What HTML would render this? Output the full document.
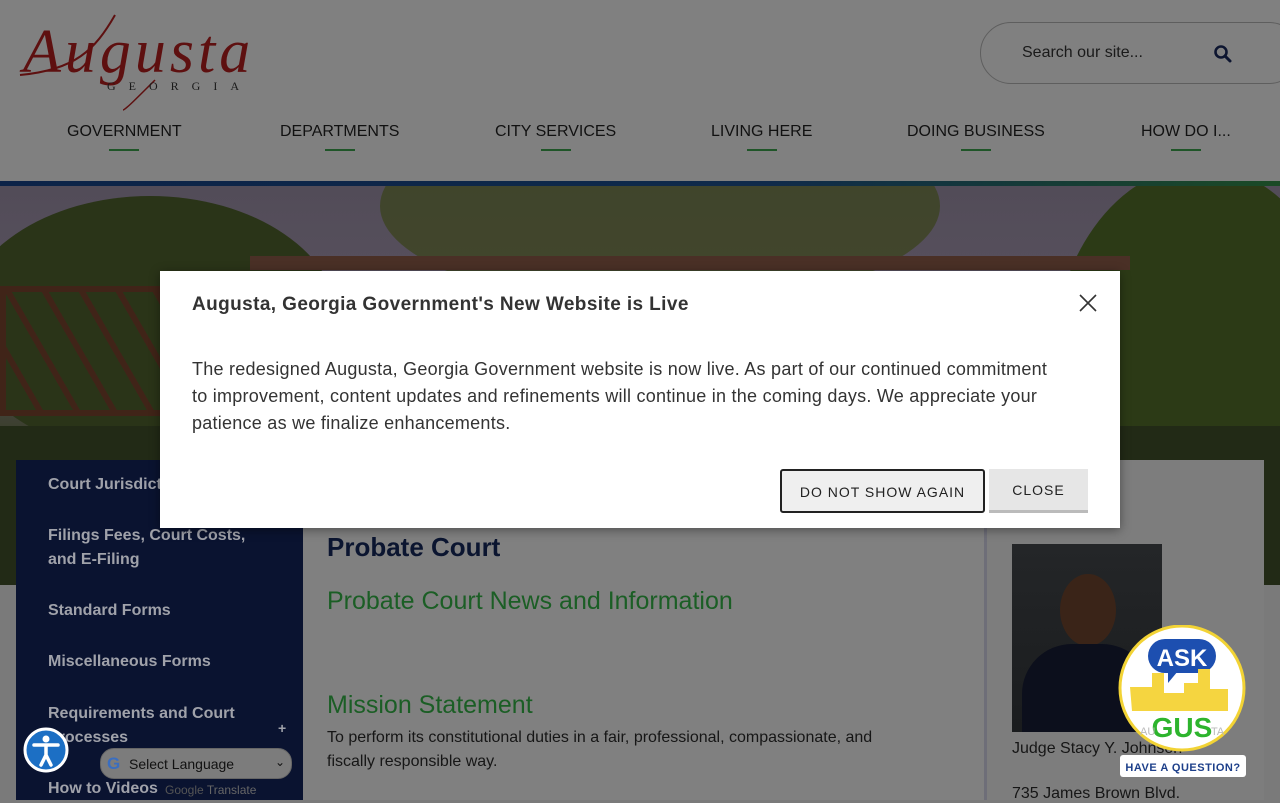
<!DOCTYPE html>
<html><head><meta charset="utf-8"><style>
*{box-sizing:border-box;margin:0;padding:0}
body{width:1280px;height:800px;overflow:hidden;background:#7a7a7a;font-family:"Liberation Sans",sans-serif;position:relative}
.hdr{position:absolute;left:0;top:0;width:1280px;height:181px;background:#808080}
.stripe{position:absolute;left:0;top:181px;width:1280px;height:5px;background:linear-gradient(90deg,#0c2348,#0f2a4a 60%,#1b4a26)}
.nav a{position:absolute;top:123px;font-size:16px;color:#111;text-decoration:none}
.nav a:after{content:"";position:absolute;left:50%;margin-left:-15px;bottom:-10px;width:30px;height:2px;background:#1f5528}
.search{position:absolute;left:980px;top:22px;width:320px;height:62px;border:1px solid #5e5e5e;border-radius:31px}
.search span{position:absolute;left:41px;top:21px;font-size:16px;color:#1a1a1a}
.hero{position:absolute;left:0;top:186px;width:1280px;height:399px;overflow:hidden;background:linear-gradient(180deg,#524c58 0%,#5a5260 40%,#2e3618 70%,#222a14 100%)}
.blob{position:absolute;border-radius:50%}
.leftnav{position:absolute;left:16px;top:460px;width:287px;height:340px;background:#0a1330}
.leftnav div{position:absolute;left:32px;font-size:16px;font-weight:bold;color:#a0a2aa;line-height:24px}
.content{position:absolute;left:303px;top:460px;width:684px;height:340px;background:#808080;border-right:3px solid #6e6e78}
.side{position:absolute;left:987px;top:460px;width:277px;height:340px;background:#7d7d7d}
.modal{position:absolute;left:160px;top:271px;width:960px;height:257px;background:#fff;box-shadow:0 2px 10px rgba(0,0,0,.4)}
.modal h2{position:absolute;left:32px;top:23px;font-size:19px;font-weight:bold;color:#333;letter-spacing:0.4px}
.modal p{position:absolute;left:32px;top:85px;width:868px;font-size:18px;line-height:27px;color:#333;letter-spacing:0.25px}
.btn{position:absolute;top:198px;height:44px;font-size:14px;letter-spacing:1px;color:#222;text-align:center;line-height:42px}
</style></head><body>
<div class="hdr">
  <svg style="position:absolute;left:15px;top:10px" width="305" height="105" viewBox="0 0 305 105">
    <text x="8" y="62" font-family="Liberation Serif,serif" font-style="italic" font-size="62" fill="#5e1010" letter-spacing="4">Augusta</text>
    <path d="M100 5 C80 40,60 60,5 65" stroke="#5e1010" stroke-width="2" fill="none"/>
    <path d="M140 70 C120 90,110 100,108 100" stroke="#5e1010" stroke-width="1.5" fill="none"/>
    <text x="92" y="80" font-family="Liberation Serif,serif" font-size="12" fill="#1a1a1a" letter-spacing="13">GEORGIA</text>
  </svg>
  <div class="search"><span>Search our site...</span>
   <svg style="position:absolute;left:232px;top:21px" width="20" height="20" viewBox="0 0 20 20"><circle cx="8" cy="8" r="5.5" stroke="#0d1530" stroke-width="2.6" fill="none"/><path d="M12 12l5 5" stroke="#0d1530" stroke-width="3" stroke-linecap="round"/></svg></div>
  <div class="nav">
   <a style="left:67px">GOVERNMENT</a><a style="left:280px">DEPARTMENTS</a><a style="left:495px">CITY SERVICES</a><a style="left:711px">LIVING HERE</a><a style="left:907px">DOING BUSINESS</a><a style="left:1141px">HOW DO I...</a>
  </div>
</div>
<div class="stripe"></div>
<div class="hero">
  <div class="blob" style="left:-40px;top:10px;width:380px;height:260px;background:#2a3418"></div>
  <div class="blob" style="left:380px;top:-80px;width:560px;height:200px;background:#3c4420;opacity:.8"></div>
  <div class="blob" style="left:1050px;top:-20px;width:300px;height:420px;background:#2c3a16"></div>
  <div style="position:absolute;left:0;top:100px;width:250px;height:130px;border:6px solid #402418;background:repeating-linear-gradient(60deg,transparent 0 26px,#402418 26px 32px)"></div>
  <div style="position:absolute;left:250px;top:70px;width:880px;height:14px;background:#4a3026"></div>
  <div style="position:absolute;left:0;top:240px;width:1280px;height:160px;background:#222a16"></div>
</div>
<div class="leftnav">
  <div style="top:13px">Court Jurisdiction</div>
  <div style="top:64px">Filings Fees, Court Costs,<br>and E-Filing</div>
  <div style="top:139px">Standard Forms</div>
  <div style="top:190px">Miscellaneous Forms</div>
  <div style="top:242px">Requirements and Court<br>Processes</div>
  <div style="top:256px;left:262px;font-size:14px">+</div>
  <div style="top:317px">How to Videos</div>
</div>
<div class="content">
  <div style="position:absolute;left:24px;top:72px;font-size:26px;font-weight:bold;color:#0b1530">Probate Court</div>
  <div style="position:absolute;left:24px;top:127px;font-size:25px;color:#1b5e25">Probate Court News and Information</div>
  <div style="position:absolute;left:24px;top:231px;font-size:25px;color:#1b5e25">Mission Statement</div>
  <div style="position:absolute;left:24px;top:266px;font-size:16px;line-height:24px;color:#161616;width:585px">To perform its constitutional duties in a fair, professional, compassionate, and fiscally responsible way.</div>
</div>
<div class="side">
  <div style="position:absolute;left:25px;top:84px;width:150px;height:188px;background:linear-gradient(180deg,#242628,#1a1c1e)">
    <div class="blob" style="left:48px;top:30px;width:56px;height:72px;background:#3a2418"></div>
    <div style="position:absolute;left:10px;top:100px;width:130px;height:88px;border-radius:50px 50px 0 0;background:#0c0f1c"></div>
  </div>
  <div style="position:absolute;left:25px;top:280px;font-size:16px;color:#161616">Judge Stacy Y. Johnson</div>
  <div style="position:absolute;left:25px;top:325px;font-size:16px;color:#161616">735 James Brown Blvd.</div>
</div>
<svg style="position:absolute;left:1118px;top:625px" width="130" height="155" viewBox="0 0 130 155">
  <circle cx="64" cy="63" r="62" fill="#fff" stroke="#f2d335" stroke-width="3"/>
  <rect x="30" y="14" width="68" height="34" rx="17" fill="#1d4fb0"/><path d="M50 46 l0 12 l10 -12z" fill="#1d4fb0"/>
  <text x="64" y="41" text-anchor="middle" font-family="Liberation Sans" font-weight="bold" font-size="24" fill="#fff">ASK</text>
  <path d="M12 62h22v-14h12v20h20v-10h14v-14h12v20h18v22H14z" fill="#f5d540"/>
  <text x="64" y="112" text-anchor="middle" font-family="Liberation Sans" font-weight="bold" font-size="28" fill="#2db42d">GUS</text>
  <text x="22" y="110" font-size="11" fill="#bbb" font-family="Liberation Sans">AU</text><text x="93" y="110" font-size="11" fill="#bbb" font-family="Liberation Sans">TA</text>
  <rect x="2" y="130" width="126" height="22" rx="3" fill="#fff"/>
  <text x="65" y="146" text-anchor="middle" font-family="Liberation Sans" font-weight="bold" font-size="11" fill="#1d3f8a" letter-spacing=".5">HAVE A QUESTION?</text>
</svg>
<svg style="position:absolute;left:23px;top:727px" width="46" height="46" viewBox="0 0 46 46">
  <circle cx="23" cy="23" r="21" fill="#1c6fc4" stroke="#fff" stroke-width="3"/>
  <circle cx="23" cy="12" r="3.5" fill="#fff"/><path d="M11 18h24M23 18v10l-5 10M23 28l5 10" stroke="#fff" stroke-width="3.5" stroke-linecap="round" fill="none"/>
</svg>
<div style="position:absolute;left:100px;top:748px;width:192px;height:31px;border-radius:14px;background:#7c7c7c;border:1px solid #666">
  <span style="position:absolute;left:6px;top:5px;font-weight:bold;font-size:17px;color:#3a6ec0">G</span>
  <span style="position:absolute;left:28px;top:7px;font-size:14px;color:#111">Select Language</span>
  <span style="position:absolute;right:6px;top:6px;font-size:12px;color:#111">&#8964;</span>
</div>
<div style="position:absolute;left:165px;top:783px;font-size:12px;color:#555">Google <span style="color:#666">Translate</span></div>
<div class="modal">
  <h2>Augusta, Georgia Government's New Website is Live</h2>
  <svg style="position:absolute;left:919px;top:23px" width="18" height="18" viewBox="0 0 18 18"><path d="M1 1l16 16M17 1L1 17" stroke="#333" stroke-width="1.6"/></svg>
  <p>The redesigned Augusta, Georgia Government website is now live. As part of our continued commitment to improvement, content updates and refinements will continue in the coming days. We appreciate your patience as we finalize enhancements.</p>
  <div class="btn" style="left:620px;width:205px;border:2px solid #222;border-radius:3px;background:#efefef">DO NOT SHOW AGAIN</div>
  <div class="btn" style="left:829px;width:99px;background:#e6e6e6;border-bottom:3px solid #bbb">CLOSE</div>
</div>
</body></html>
